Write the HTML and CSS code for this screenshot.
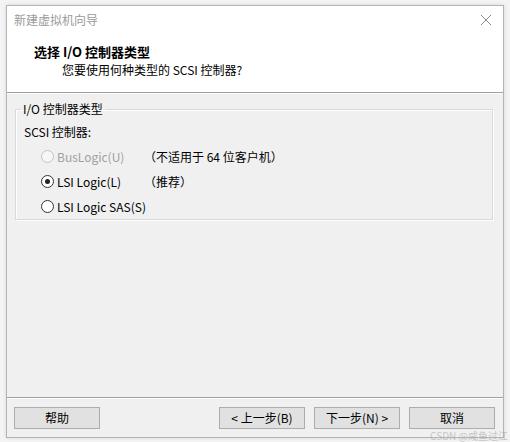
FILE: index.html
```html
<!DOCTYPE html>
<html lang="zh-CN">
<head>
<meta charset="utf-8">
<title>新建虚拟机向导</title>
<link rel="stylesheet" href="styles.css">
</head>
<body>
<div class="window">
  <div class="header">
    <div class="titlebar">
      <span class="caption">新建虚拟机向导</span>
      <svg class="close" width="12" height="12" viewBox="0 0 12 12"><path d="M1 1 L11 11 M11 1 L1 11" stroke="#8a8a8a" stroke-width="1" fill="none"/></svg>
    </div>
    <div class="heading">选择 I/O 控制器类型</div>
    <div class="subheading">您要使用何种类型的 SCSI 控制器?</div>
  </div>
  <div class="content">
    <fieldset class="group">
      <legend>I/O 控制器类型</legend>
      <div class="label">SCSI 控制器:</div>
      <div class="options">
        <div class="opt disabled"><span class="radio"></span><span>BusLogic(U)</span></div>
        <div class="note">（不适用于 64 位客户机）</div>
        <div class="opt"><span class="radio checked"></span><span>LSI Logic(L)</span></div>
        <div class="note">（推荐）</div>
        <div class="opt"><span class="radio"></span><span>LSI Logic SAS(S)</span></div>
        <div class="note"></div>
      </div>
    </fieldset>
  </div>
  <div class="footer">
    <button class="btn">帮助</button>
    <div class="spacer"></div>
    <button class="btn">&lt; 上一步(B)</button>
    <button class="btn">下一步(N) &gt;</button>
    <button class="btn">取消</button>
  </div>
</div>
<div class="watermark">CSDN @咸鱼过江</div>
</body>
</html>
```
FILE: styles.css
```css
html, body {
  margin: 0;
  padding: 0;
}
body {
  background: #f4f4f4;
  padding: 5px 6px 0 6px;
  font-family: "Noto Sans CJK SC", "Microsoft YaHei", sans-serif;
  font-size: 12px;
  color: #000;
  width: 510px;
  height: 442px;
  box-sizing: border-box;
  overflow: hidden;
  position: relative;
}
.window {
  width: 498px;
  height: 433px;
  box-sizing: border-box;
  border: 1px solid #b4b4b4;
  box-shadow: 0 0 4px rgba(0,0,0,0.12);
  display: flex;
  flex-direction: column;
  background: #f0f0f0;
}
.header {
  background: #fff;
  height: 86px;
  border-bottom: 1px solid #a0a0a0;
  flex: none;
}
.titlebar {
  height: 28px;
  display: flex;
  align-items: center;
  padding: 0 11px 0 7px;
}
.caption {
  color: #9a9a9a;
  font-size: 12px;
  line-height: 16px;
  flex: 1;
}
.close {
  display: block;
}
.heading {
  font-weight: bold;
  font-size: 13px;
  line-height: 18px;
  padding-left: 27px;
  margin-top: 9px;
}
.subheading {
  font-size: 12px;
  line-height: 18px;
  padding-left: 55px;
}
.content {
  flex: 1;
  border-top: 1px solid #fff;
  padding: 7px 10px 0 8px;
}
.group {
  margin: 0;
  padding: 7px 0 0 0;
  border: 1px solid #d9d9d9;
  box-shadow: 1px 1px 0 #fff, inset 1px 1px 0 #fff;
  min-width: 0;
}
.group legend {
  margin-left: 5px;
  padding: 0 2px;
  font-size: 12px;
  line-height: 16px;
}
.label {
  padding-left: 8px;
  line-height: 16px;
}
.options {
  display: grid;
  grid-template-columns: 103px auto;
  grid-auto-rows: 25px;
  padding-left: 25px;
  margin-top: 4px;
  align-items: center;
}
.opt {
  display: flex;
  align-items: center;
  gap: 3px;
  white-space: nowrap;
}
.note {
  line-height: 16px;
  white-space: nowrap;
}
.radio {
  width: 11px;
  height: 11px;
  border: 1px solid #333;
  border-radius: 50%;
  background: #fff;
  box-sizing: content-box;
  position: relative;
  flex: none;
}
.radio.checked::after {
  content: "";
  position: absolute;
  left: 3px;
  top: 3px;
  width: 5px;
  height: 5px;
  border-radius: 50%;
  background: #222;
}
.opt.disabled {
  color: #a0a0a0;
}
.opt.disabled .radio {
  border-color: #c4c4c4;
  background: #f6f6f6;
}
.footer {
  flex: none;
  border-top: 1px solid #a0a0a0;
  box-shadow: inset 0 1px 0 #fff;
  padding: 9px 8px 0 7px;
  display: flex;
  align-items: flex-start;
  gap: 9px;
  box-sizing: border-box;
  height: 40px;
}
.spacer {
  flex: 1;
}
.btn {
  width: 86px;
  height: 22px;
  margin: 0;
  padding: 0;
  border: 1px solid #adadad;
  background: #e1e1e1;
  font-family: "Noto Sans CJK SC", "Microsoft YaHei", sans-serif;
  font-size: 12px;
  color: #000;
  line-height: 18px;
}
.watermark {
  position: absolute;
  right: 2px;
  bottom: 0;
  font-size: 10px;
  line-height: 12px;
  color: rgba(160,160,160,0.55);
}
```
